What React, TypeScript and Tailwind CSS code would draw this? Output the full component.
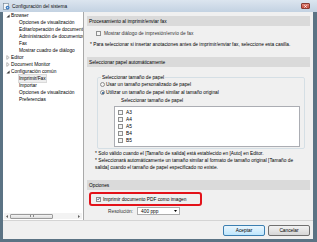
import React from 'react';

const Check = ({ checked = false }: { checked?: boolean }) => (
  <span className="w-[5px] h-[5px] shrink-0 border border-[#8e8f8f] bg-[#f4f4f4] flex items-center justify-center">
    {checked && (
      <svg width="4" height="4" viewBox="0 0 4 4">
        <path d="M0.4 2 L1.5 3.2 L3.6 0.5" stroke="#1e3f73" strokeWidth="0.9" fill="none" />
      </svg>
    )}
  </span>
);

const Radio = ({ checked = false }: { checked?: boolean }) => (
  <span className="w-[5px] h-[5px] shrink-0 rounded-full border border-[#8e8f8f] bg-[#f4f4f4] flex items-center justify-center">
    {checked && <span className="w-[2px] h-[2px] rounded-full bg-[#1d4f86]" />}
  </span>
);

const Expanded = () => (
  <svg width="4" height="4" viewBox="0 0 4 4">
    <path d="M3.6 0.4 L3.6 3.6 L0.4 3.6 Z" fill="#3c3c3c" />
  </svg>
);

const Collapsed = () => (
  <svg width="4" height="5" viewBox="0 0 4 5">
    <path d="M0.8 0.6 L3.2 2.5 L0.8 4.4 Z" fill="none" stroke="#8a8a8a" strokeWidth="0.6" />
  </svg>
);

type Node = { label: string; level: number; icon?: 'exp' | 'col'; selected?: boolean };

const tree: Node[] = [
  { label: 'Browser', level: 0, icon: 'exp' },
  { label: 'Opciones de visualización', level: 1 },
  { label: 'Editar/operación de documentos', level: 1 },
  { label: 'Administración de documentos', level: 1 },
  { label: 'Fax', level: 1 },
  { label: 'Mostrar cuadro de diálogo', level: 1 },
  { label: 'Editor', level: 0, icon: 'col' },
  { label: 'Document Monitor', level: 0, icon: 'col' },
  { label: 'Configuración común', level: 0, icon: 'exp' },
  { label: 'Imprimir/Fax', level: 1, selected: true },
  { label: 'Importar', level: 1 },
  { label: 'Opciones de visualización', level: 1 },
  { label: 'Preferencias', level: 1 },
];

const sizes = ['A3', 'A4', 'A5', 'B4', 'B5'];

const Header = ({ children, className = '' }: { children: React.ReactNode; className?: string }) => (
  <div className={`h-[10px] bg-[#dadada] flex items-center pl-[2px] ${className}`}>{children}</div>
);

export default function App() {
  return (
    <div className="w-[317px] h-[242px] bg-[#5b7384] flex flex-col overflow-hidden font-['Liberation_Sans',Arial,sans-serif] text-[4.8px] leading-[7px] text-black">
      {/* title bar */}
      <div className="h-[12px] bg-gradient-to-b from-[#dce5ef] to-[#c3d2e2] flex items-center pl-[3px] pr-[7px]">
        <svg width="7" height="7" viewBox="0 0 7 7" className="shrink-0">
          <rect x="0.5" y="0.5" width="5" height="6" fill="#f4f6f8" stroke="#6d7f90" strokeWidth="0.6" />
          <circle cx="4.6" cy="4.6" r="1.9" fill="#3f7cc0" />
          <circle cx="4.6" cy="4.6" r="0.7" fill="#dbe8f5" />
        </svg>
        <span className="ml-[2px] text-[#111]">Configuración del sistema</span>
        <div className="ml-auto w-[9px] h-[6px] rounded-[1px] bg-gradient-to-b from-[#e28a7e] to-[#c6483a] border border-[#8a3b33] flex items-center justify-center">
          <svg width="3" height="3" viewBox="0 0 3 3">
            <path d="M0.3 0.3 L2.7 2.7 M2.7 0.3 L0.3 2.7" stroke="#fff" strokeWidth="0.8" />
          </svg>
        </div>
      </div>

      {/* body */}
      <div className="flex-1 ml-[3px] mr-[4px] mb-[3px] bg-[#f0f0f0] flex flex-col">
        <div className="h-[208px] flex">
          {/* tree */}
          <div className="w-[81px] bg-white border-r border-[#a9a9a9] flex flex-col">
            <div className="flex-1 overflow-hidden">
              {tree.map((n, i) => (
                <div
                  key={i}
                  className={`h-[7px] flex items-center whitespace-nowrap ${n.level === 0 ? 'pl-[3px]' : 'pl-[16px]'}`}
                >
                  {n.level === 0 && (
                    <span className="w-[5px] flex items-center">
                      {n.icon === 'exp' ? <Expanded /> : <Collapsed />}
                    </span>
                  )}
                  <span className={n.selected ? 'bg-[#eeeeee] outline outline-[0.5px] outline-[#dadada]' : ''}>{n.label}</span>
                </div>
              ))}
            </div>
            <div className="h-[6px] mb-[1px] mx-[1px] bg-[#f3f3f3] flex items-center">
              <span className="w-[6px] flex justify-center">
                <svg width="2" height="3" viewBox="0 0 2 3"><path d="M2 0 L0 1.5 L2 3 Z" fill="#606060" /></svg>
              </span>
              <div className="w-[43px] h-[5px] rounded-[1px] border border-[#9a9a9a] bg-gradient-to-b from-[#f4f4f4] to-[#dcdcdc] flex items-center justify-center">
                <span className="w-[4px] h-[2px] border-x border-[#8a8a8a]" />
              </div>
              <span className="ml-auto w-[6px] flex justify-center">
                <svg width="2" height="3" viewBox="0 0 2 3"><path d="M0 0 L2 1.5 L0 3 Z" fill="#606060" /></svg>
              </span>
            </div>
          </div>

          {/* settings */}
          <div className="flex-1 pl-[3px] pr-[3px] pt-[4px] flex flex-col whitespace-nowrap">
            <Header>Procesamiento al imprimir/enviar fax</Header>
            <div className="mt-[4px] h-[7px] flex items-center pl-[9px]">
              <Check />
              <span className="ml-[3px] text-[#333]">Mostrar diálogo de impresión/envío de fax</span>
            </div>
            <div className="mt-[4px] h-[7px] flex items-center pl-[3px]">
              * Para seleccionar si insertar anotaciones antes de imprimir/enviar fax, seleccione esta casilla.
            </div>

            <Header className="mt-[9px]">Seleccionar papel automáticamente</Header>

            <fieldset className="mt-[7px] ml-[10px] mr-[5px] border border-[#d5dfe5] rounded-[2px] pb-[1px]">
              <legend className="ml-[3px] px-[1px] h-[7px] leading-[7px]">Seleccionar tamaño de papel</legend>
              <div className="h-[7px] flex items-center pl-[2px]">
                <Radio />
                <span className="ml-[1px]">Usar un tamaño personalizado de papel</span>
              </div>
              <div className="mt-[1px] h-[7px] flex items-center pl-[2px]">
                <Radio checked />
                <span className="ml-[1px]">Utilizar un tamaño de papel similar al tamaño original</span>
              </div>
              <div className="mt-[1px] h-[7px] flex items-center pl-[23px]">Seleccionar tamaño de papel</div>
              <div className="mt-[2px] ml-[16px] mr-[4px] h-[41px] bg-white border border-[#abadb3] pt-[2px]">
                {sizes.map((s) => (
                  <div key={s} className="h-[7px] flex items-center pl-[3px]">
                    <Check />
                    <span className="ml-[3px]">{s}</span>
                  </div>
                ))}
              </div>
            </fieldset>

            <div className="mt-[1px] pl-[8px] leading-[7px]">
              <div>* Solo válido cuando el [Tamaño de salida] está establecido en [Auto] en Editor.</div>
              <div>* Seleccionará automáticamente un tamaño similar al formato de tamaño original [Tamaño de</div>
              <div>salida] cuando el tamaño de papel especificado no existe.</div>
            </div>

            <Header className="mt-[9px]">Opciones</Header>

            <div className="mt-[2px] ml-[2px] w-[113px] h-[14px] border-2 border-[#e3121a] rounded-[3px] flex items-center pl-[5px]">
              <Check checked />
              <span className="ml-[2px]">Imprimir documento PDF como imagen</span>
            </div>
            <div className="mt-[1px] h-[8px] flex items-center pl-[21px]">
              <span className="text-[#333]">Resolución:</span>
              <div className="ml-[4px] w-[43px] h-[8px] bg-white border border-[#acacac] flex items-center pl-[3px] pr-[2px]">
                <span>400 ppp</span>
                <svg width="3" height="2" viewBox="0 0 3 2" className="ml-auto">
                  <path d="M0 0 L3 0 L1.5 2 Z" fill="#000" />
                </svg>
              </div>
            </div>
          </div>
        </div>

        <div className="h-px bg-[#d4d4d4]" />

        {/* buttons */}
        <div className="flex-1 flex items-center justify-end gap-[3px] pr-[3px] pt-[1px]">
          <button className="w-[42px] h-[11px] rounded-[2px] border border-[#3c7fb1] bg-gradient-to-b from-[#eaf6fd] to-[#bee6fd] flex items-center justify-center text-[4.8px] leading-[7px]">
            Aceptar
          </button>
          <button className="w-[42px] h-[11px] rounded-[2px] border border-[#707070] bg-gradient-to-b from-[#f2f2f2] to-[#d6d6d6] flex items-center justify-center text-[4.8px] leading-[7px]">
            Cancelar
          </button>
        </div>
      </div>
    </div>
  );
}
